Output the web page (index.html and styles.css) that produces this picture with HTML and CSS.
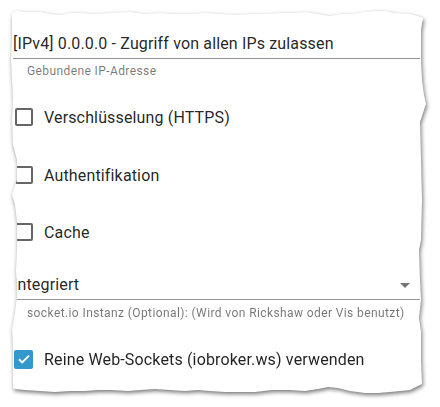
FILE: index.html
```html
<!DOCTYPE html>
<html>
<head>
<meta charset="utf-8">
<link rel="stylesheet" href="styles.css">
</head>
<body>
<div class="stage">
  <div class="paper">
    <div class="field">
      <div class="input">[IPv4] 0.0.0.0 - Zugriff von allen IPs zulassen</div>
      <div class="helper">Gebundene IP-Adresse</div>
    </div>

    <label class="row row-first">
      <span class="box"></span>
      <span class="label">Verschlüsselung (HTTPS)</span>
    </label>
    <label class="row row-mid">
      <span class="box"></span>
      <span class="label">Authentifikation</span>
    </label>
    <label class="row row-mid2">
      <span class="box"></span>
      <span class="label">Cache</span>
    </label>

    <div class="field field-select">
      <div class="input select">
        <span>Integriert</span>
        <svg class="arrow" width="24" height="24" viewBox="0 0 24 24"><path d="M7 10l5 5 5-5z"/></svg>
      </div>
      <div class="helper helper2">socket.io Instanz (Optional): (Wird von Rickshaw oder Vis benutzt)</div>
    </div>

    <label class="row row-last">
      <span class="box checked">
        <svg width="18" height="18" viewBox="0 0 18 18"><path d="M4 9.2l3.2 3.2L14 5.6" fill="none" stroke="#fff" stroke-width="2"/></svg>
      </span>
      <span class="label">Reine Web-Sockets (iobroker.ws) verwenden</span>
    </label>
  </div>
</div>
</body>
</html>
```

FILE: styles.css
```css
html, body {
  margin: 0;
  padding: 0;
  background: #ffffff;
}
body {
  width: 440px;
  height: 407px;
  overflow: hidden;
  font-family: Roboto, "Liberation Sans", sans-serif;
  color: rgba(0, 0, 0, 0.87);
}
.stage {
  width: 440px;
  height: 407px;
  filter: drop-shadow(1px 2px 2px rgba(0, 0, 0, 0.55));
}
.paper {
  box-sizing: border-box;
  width: 440px;
  height: 407px;
  background: #ffffff;
  padding: 30px 20px 0 13px;
  clip-path: polygon(
    12px 14px, 16px 11px, 25px 12px, 40px 12px, 50px 14px, 60px 15px, 70px 13px, 80px 13px,
    95px 14px, 110px 13px, 130px 12px, 145px 14px, 160px 13px, 175px 14px, 190px 14px, 205px 13px,
    220px 14px, 235px 15px, 250px 14px, 265px 14px, 280px 13px, 295px 13px, 305px 12px, 318px 14px,
    330px 16px, 342px 14px, 352px 14px, 365px 12px, 375px 11px, 385px 11px, 395px 13px, 410px 14px,
    418px 16px, 423px 18px,
    421px 30px, 421px 60px, 422px 80px, 424px 95px, 426px 104px, 423px 113px, 420px 122px,
    421px 160px, 422px 200px, 421px 240px, 419px 250px, 420px 280px, 421px 300px, 419px 318px,
    421px 332px, 421px 360px, 422px 384px,
    416px 387px, 410px 390px, 400px 391px, 390px 392px, 378px 393px, 365px 393px, 350px 391px,
    338px 388px, 328px 387px, 318px 389px, 305px 391px, 290px 390px, 272px 390px, 255px 392px,
    240px 392px, 225px 392px, 210px 391px, 198px 390px, 185px 391px, 170px 390px, 155px 389px,
    140px 390px, 128px 391px, 112px 390px, 98px 390px, 85px 391px, 70px 391px, 55px 392px,
    40px 391px, 25px 390px, 15px 389px, 13px 388px,
    13px 370px, 13px 345px, 12px 330px, 15px 312px, 17px 296px, 16px 270px, 17px 250px,
    17px 222px, 15px 205px, 12px 195px, 14px 188px, 17px 180px, 17px 160px, 13px 145px,
    12px 120px, 13px 100px, 12px 80px, 11px 60px, 12px 40px
  );
}
.field {
  display: flex;
  flex-direction: column;
}
.input {
  font-size: 16px;
  line-height: 19px;
  letter-spacing: 0.15px;
  padding: 4px 0 5px 0;
  border-bottom: 1px solid #949494;
  white-space: nowrap;
}
.helper {
  margin: 2px 14px 0 14px;
  font-size: 12px;
  line-height: 20px;
  letter-spacing: 0.4px;
  color: rgba(0, 0, 0, 0.54);
  white-space: nowrap;
}
.helper2 {
  margin-top: 3px;
}
.row {
  display: flex;
  align-items: center;
  height: 24px;
  font-size: 16px;
  letter-spacing: 0.15px;
}
.row-first { margin-top: 24px; }
.row-mid { margin-top: 34px; }
.row-mid2 { margin-top: 33px; }
.row-last { margin-top: 24px; }
.box {
  box-sizing: border-box;
  width: 18px;
  height: 18px;
  margin-left: 2px;
  border: 2px solid #666666;
  border-radius: 2px;
  flex: none;
  display: flex;
  align-items: center;
  justify-content: center;
}
.box.checked {
  border: none;
  background: #3399cc;
  margin-left: 1px;
  width: 19px;
  height: 19px;
}
.label {
  margin-left: 11px;
  line-height: 19px;
  white-space: nowrap;
}
.field-select {
  margin-top: 27px;
}
.select {
  display: flex;
  align-items: center;
  justify-content: space-between;
  height: 19px;
  padding-right: 0;
}
.arrow {
  fill: rgba(0, 0, 0, 0.54);
  margin-right: 3px;
  flex: none;
}
```
